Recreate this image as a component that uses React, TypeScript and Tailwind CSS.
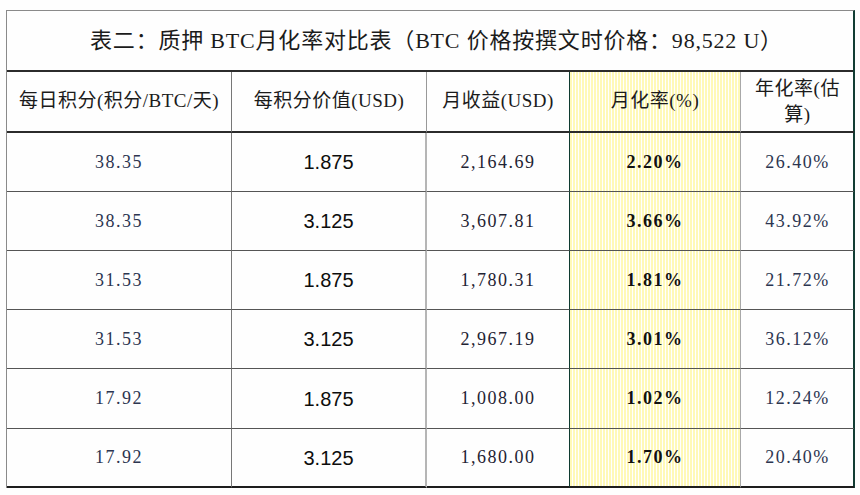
const rows = [
  { daily: "38.35", value: "1.875", income: "2,164.69", monthly: "2.20%", yearly: "26.40%" },
  { daily: "38.35", value: "3.125", income: "3,607.81", monthly: "3.66%", yearly: "43.92%" },
  { daily: "31.53", value: "1.875", income: "1,780.31", monthly: "1.81%", yearly: "21.72%" },
  { daily: "31.53", value: "3.125", income: "2,967.19", monthly: "3.01%", yearly: "36.12%" },
  { daily: "17.92", value: "1.875", income: "1,008.00", monthly: "1.02%", yearly: "12.24%" },
  { daily: "17.92", value: "3.125", income: "1,680.00", monthly: "1.70%", yearly: "20.40%" },
];

const serif = "font-['SimSun','Liberation_Serif','Noto_Sans_CJK_SC',serif]";
const stripes =
  "bg-[repeating-linear-gradient(90deg,#fff9b8_0px,#fff9b8_2px,#ffffff_2px,#ffffff_3px)]";
const head = `h-[61px] flex items-center justify-center border-b-2 border-b-[#2b2b2b] text-[19px] tracking-[0.5px] text-[#1b1b1b] ${serif}`;

export default function App() {
  return (
    <div className="w-[860px] h-[495px] bg-[#fefefe] pl-[6px] pt-[10px]">
      <div className="w-[849px] border-l border-t border-[#8a8a8a] border-r-2 border-r-[#123d33]">
        {/* title */}
        <div
          className={`h-[61px] flex items-center justify-center pl-[13px] border-b-2 border-[#2b2b2b] text-[22px] tracking-[0.8px] text-[#1b1b1b] ${serif}`}
        >
          表二：质押 BTC月化率对比表（BTC 价格按撰文时价格：98,522 U）
        </div>

        <div className="grid grid-cols-[225px_195px_143px_171px_113px]">
          {/* header */}
          <div className={`${head} border-r border-[#777]`}>每日积分(积分/BTC/天)</div>
          <div className={`${head} border-r border-[#999]`}>每积分价值(USD)</div>
          <div className={`${head} border-r border-[#0f3a30]`}>月收益(USD)</div>
          <div className={`${head} border-r border-[#a8a8a8] ${stripes}`}>月化率(%)</div>
          <div className={`${head} leading-[26px] text-center px-2`}>年化率(估算)</div>

          {rows.map((r, i) => {
            const h = i === 4 ? "h-[60px]" : "h-[59px]";
            const line =
              i === rows.length - 1 ? "border-b-2 border-b-[#1d1d1d]" : "border-b border-b-[#555]";
            return [
              <div
                key={`a${i}`}
                className={`${h} ${line} flex items-center justify-center border-r border-[#777] text-[18px] tracking-[1.5px] text-[#2c3550] ${serif}`}
              >
                {r.daily}
              </div>,
              <div
                key={`b${i}`}
                className={`${h} ${line} flex items-center justify-center border-r-2 border-r-[#b5b5b5] text-[20px] text-[#0d0d0d] font-['Liberation_Sans',Arial,sans-serif]`}
              >
                {r.value}
              </div>,
              <div
                key={`c${i}`}
                className={`${h} ${line} flex items-center justify-center border-r border-r-[#0f3a30] text-[18px] tracking-[1.5px] text-[#1f2333] ${serif}`}
              >
                {r.income}
              </div>,
              <div
                key={`d${i}`}
                className={`${h} ${line} flex items-center justify-center border-r border-r-[#a8a8a8] text-[18px] font-bold tracking-[1.5px] text-[#111] ${stripes} ${serif}`}
              >
                {r.monthly}
              </div>,
              <div
                key={`e${i}`}
                className={`${h} ${line} flex items-center justify-center text-[18px] tracking-[1.5px] text-[#2c3550] ${serif}`}
              >
                {r.yearly}
              </div>,
            ];
          })}
        </div>
      </div>
    </div>
  );
}
